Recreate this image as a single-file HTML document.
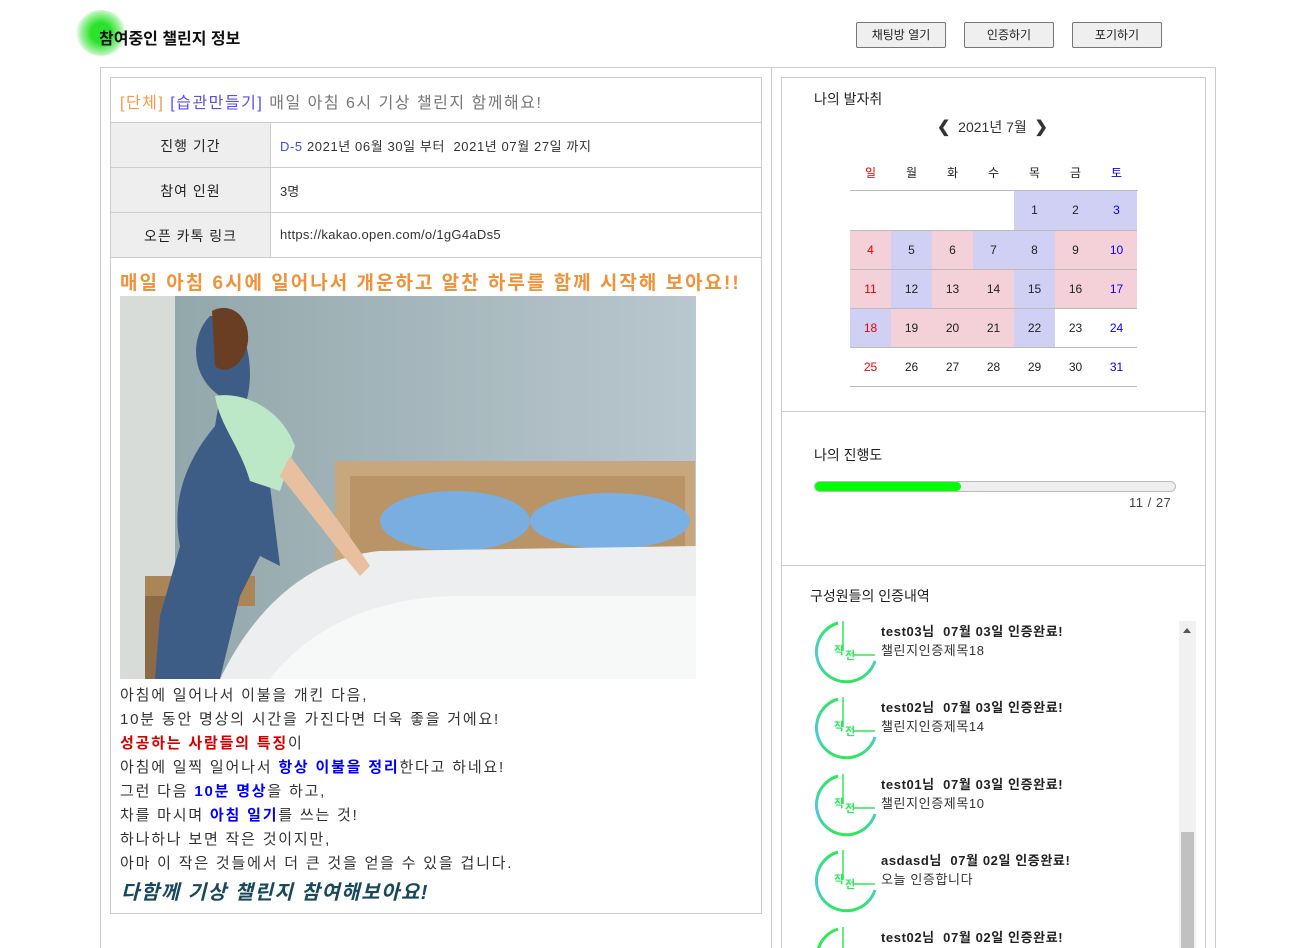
<!DOCTYPE html>
<html><head><meta charset="utf-8"><style>
*{margin:0;padding:0;box-sizing:border-box}
html,body{width:1311px;height:948px;overflow:hidden}
body{background:#fff;font-family:"Liberation Sans","Noto Sans CJK KR",sans-serif;color:#333;position:relative}
.abs{position:absolute}
.btn{position:absolute;top:22px;height:26px;width:90px;border:1px solid #777;border-radius:2px;background:#efefef;font-size:12px;text-align:center;line-height:24px;color:#222}
.cal{position:absolute;left:850px;top:190px;border-collapse:collapse}
.cal td{width:41px;height:39px;text-align:center;font-size:12px;border-bottom:1px solid #bbb;color:#222;padding:0}
.p{background:#d0cff4}.k{background:#f4d0d8}
.r{color:#e00 !important}.b{color:#00f !important}
.item{position:absolute;left:813px;width:300px;height:64px}
.item svg{position:absolute;left:0;top:0}
.item .t{position:absolute;left:68px;top:0;font-size:13px;font-weight:bold;color:#222;white-space:nowrap;letter-spacing:.6px}
.item .s{position:absolute;left:68px;top:19px;font-size:13px;color:#333;white-space:nowrap;letter-spacing:.6px}
.txt{position:absolute;left:120px;font-size:15px;color:#333;line-height:24px;letter-spacing:1.8px;white-space:nowrap}
</style></head><body>
<div class="abs" style="left:76px;top:10px;width:50px;height:46px;border-radius:50%;background:radial-gradient(circle,#2be32b 30%,rgba(80,230,80,.5) 60%,rgba(255,255,255,0) 75%)"></div>
<div class="abs" style="left:99px;top:25px;font-size:16px;font-weight:bold;color:#111">참여중인 챌린지 정보</div>
<div class="btn" style="left:856px">채팅방 열기</div>
<div class="btn" style="left:964px">인증하기</div>
<div class="btn" style="left:1072px">포기하기</div>

<div class="abs" style="left:100px;top:67px;width:1116px;height:900px;border:1px solid #ccc"></div>
<div class="abs" style="left:771px;top:67px;width:1px;height:900px;background:#ccc"></div>

<div class="abs" style="left:110px;top:77px;width:652px;height:837px;border:1px solid #ccc"></div>
<div class="abs" style="left:120px;top:89px;font-size:16px;color:#777;letter-spacing:1.5px;white-space:nowrap"><span style="color:#f29a4a">[단체]</span> <span style="color:#5a4df0">[습관만들기]</span> 매일 아침 6시 기상 챌린지 함께해요!</div>
<div class="abs" style="left:111px;top:122px;width:650px;height:1px;background:#ccc"></div>
<div class="abs" style="left:111px;top:123px;width:159px;height:134px;background:#eee"></div>
<div class="abs" style="left:270px;top:123px;width:1px;height:134px;background:#ccc"></div>
<div class="abs" style="left:111px;top:167px;width:650px;height:1px;background:#ccc"></div>
<div class="abs" style="left:111px;top:212px;width:650px;height:1px;background:#ccc"></div>
<div class="abs" style="left:111px;top:257px;width:650px;height:1px;background:#ccc"></div>
<div class="abs" style="left:111px;top:136px;width:159px;text-align:center;font-size:14px;color:#222;letter-spacing:1px">진행 기간</div>
<div class="abs" style="left:111px;top:181px;width:159px;text-align:center;font-size:14px;color:#222;letter-spacing:1px">참여 인원</div>
<div class="abs" style="left:111px;top:226px;width:159px;text-align:center;font-size:14px;color:#222;letter-spacing:1px">오픈 카톡 링크</div>
<div class="abs" style="left:280px;top:136px;font-size:13px;color:#333;letter-spacing:.6px;white-space:nowrap"><span style="color:#3a50e0">D-5</span> 2021년 06월 30일 부터 &nbsp;2021년 07월 27일 까지</div>
<div class="abs" style="left:280px;top:181px;font-size:13px">3명</div>
<div class="abs" style="left:280px;top:227px;font-size:13px;letter-spacing:.3px">https://kakao.open.com/o/1gG4aDs5</div>
<div class="abs" style="left:120px;top:268px;font-size:19px;font-weight:bold;color:#f0923a;white-space:nowrap;letter-spacing:2px">매일 아침 6시에 일어나서 개운하고 알찬 하루를 함께 시작해 보아요!!</div>

<svg class="abs" style="left:120px;top:296px" width="576" height="383" viewBox="0 0 576 383">
<defs><linearGradient id="w" x1="0" x2="1"><stop offset="0" stop-color="#8fa5a8"/><stop offset="1" stop-color="#b9c7ce"/></linearGradient></defs>
<rect width="576" height="383" fill="url(#w)"/>
<rect width="55" height="383" fill="#d8dcd8"/>
<rect x="215" y="165" width="360" height="120" fill="#c8a77c"/>
<rect x="230" y="180" width="335" height="80" fill="#b89466"/>
<rect x="25" y="280" width="110" height="30" fill="#a98558"/>
<rect x="25" y="300" width="60" height="83" fill="#8b6a45"/>
<ellipse cx="335" cy="225" rx="75" ry="30" fill="#7aaee0"/>
<ellipse cx="490" cy="225" rx="80" ry="28" fill="#7ab0e4"/>
<path d="M100 383 C140 300 200 260 260 255 L576 250 L576 383 Z" fill="#eceeef"/>
<path d="M150 383 C190 330 260 300 340 300 L576 300 L576 383Z" fill="#f7f8f8"/>
<path d="M90 20 C70 40 70 80 100 100 L95 130 C70 160 50 200 60 250 L40 320 L35 383 L100 383 L120 300 L140 260 L160 270 L150 190 C160 160 140 120 125 110 C135 80 130 40 110 20 Z" fill="#3e5d86"/>
<path d="M95 100 C120 95 160 110 175 150 L160 195 L130 185 C120 150 100 130 95 100Z" fill="#bde8c8"/>
<path d="M92 15 C110 5 130 20 128 45 C125 70 105 80 95 70 Z" fill="#6a3e22"/>
<path d="M170 160 C200 200 230 240 250 270 L240 280 C215 250 185 210 160 180Z" fill="#e8c0a0"/>
</svg>

<div class="txt" style="top:684px">아침에 일어나서 이불을 개킨 다음,<br>10분 동안 명상의 시간을 가진다면 더욱 좋을 거에요!<br><b style="color:#d40000">성공하는 사람들의 특징</b>이<br>아침에 일찍 일어나서 <b style="color:#00f">항상 이불을 정리</b>한다고 하네요!<br>그런 다음 <b style="color:#00f">10분 명상</b>을 하고,<br>차를 마시며 <b style="color:#00f">아침 일기</b>를 쓰는 것!<br>하나하나 보면 작은 것이지만,<br>아마 이 작은 것들에서 더 큰 것을 얻을 수 있을 겁니다.</div>
<div class="abs" style="left:121px;top:876px;font-size:20px;font-weight:bold;font-style:italic;color:#17495a;letter-spacing:1.5px;white-space:nowrap">다함께 기상 챌린지 참여해보아요!</div>

<div class="abs" style="left:781px;top:77px;width:425px;height:900px;border:1px solid #ccc"></div>
<div class="abs" style="left:782px;top:411px;width:423px;height:1px;background:#ccc"></div>
<div class="abs" style="left:782px;top:565px;width:423px;height:1px;background:#ccc"></div>
<div class="abs" style="left:814px;top:89px;font-size:14px;color:#222">나의 발자취</div>
<div class="abs" style="left:937px;top:117px;font-size:14px;color:#333"><b style="font-size:16px">&#10094;</b>&nbsp; 2021년 7월 &nbsp;<b style="font-size:16px">&#10095;</b></div>
<table class="cal" style="top:162px"><tr>
<td class="r" style="border:0;height:20px">일</td><td style="border:0;height:20px">월</td><td style="border:0;height:20px">화</td><td style="border:0;height:20px">수</td><td style="border:0;height:20px">목</td><td style="border:0;height:20px">금</td><td class="b" style="border:0;height:20px">토</td></tr></table>
<div class="abs" style="left:850px;top:190px;width:288px;height:1px;background:#bbb"></div>
<table class="cal" style="top:191px">
<tr><td></td><td></td><td></td><td></td><td class="p">1</td><td class="p">2</td><td class="p b">3</td></tr>
<tr><td class="k r">4</td><td class="p">5</td><td class="k">6</td><td class="p">7</td><td class="p">8</td><td class="k">9</td><td class="k b">10</td></tr>
<tr><td class="k r">11</td><td class="p">12</td><td class="k">13</td><td class="k">14</td><td class="p">15</td><td class="k">16</td><td class="k b">17</td></tr>
<tr><td class="p r">18</td><td class="k">19</td><td class="k">20</td><td class="k">21</td><td class="p">22</td><td>23</td><td class="b">24</td></tr>
<tr><td class="r">25</td><td>26</td><td>27</td><td>28</td><td>29</td><td>30</td><td class="b">31</td></tr>
</table>

<div class="abs" style="left:814px;top:445px;font-size:14px;color:#222">나의 진행도</div>
<div class="abs" style="left:814px;top:481px;width:362px;height:11px;border:1px solid #bbb;border-radius:6px;background:#eee"></div>
<div class="abs" style="left:815px;top:482px;width:146px;height:9px;border-radius:5px;background:#0f0"></div>
<div class="abs" style="left:1129px;top:495px;font-size:13px;color:#444;letter-spacing:.5px">11 / 27</div>

<div class="abs" style="left:810px;top:586px;font-size:14px;color:#222">구성원들의 인증내역</div>
<div class="abs" style="left:1179px;top:621px;width:17px;height:330px;background:#f1f1f1"></div>
<div class="abs" style="left:1181px;top:832px;width:13px;height:120px;background:#c1c1c1"></div>
<div class="abs" style="left:1183px;top:628px;width:0;height:0;border-left:4px solid transparent;border-right:4px solid transparent;border-bottom:5px solid #555"></div>

<svg width="0" height="0" style="position:absolute"><defs><linearGradient id="g" x1="0" y1="0" x2="0" y2="1"><stop offset="0" stop-color="#2ee85a"/><stop offset=".6" stop-color="#4ec8e0"/><stop offset="1" stop-color="#2ee85a"/></linearGradient></defs></svg>

<div class="item" style="top:621px"><svg width="66" height="64" viewBox="0 0 66 64"><path d="M25 2 A30 30 0 1 0 62 40" fill="none" stroke="url(#g)" stroke-width="3"/><path d="M30 0 V30 M40 34 H62" stroke="#2ee85a" stroke-width="1.5" fill="none"/><text x="21" y="33" font-size="11" font-weight="bold" fill="#2ee85a" font-family="Noto Sans CJK KR">작</text><text x="32" y="38" font-size="11" font-weight="bold" fill="#2ee85a" font-family="Noto Sans CJK KR">전</text></svg><div class="t">test03님 &nbsp;07월 03일 인증완료!</div><div class="s">챌린지인증제목18</div></div>
<div class="item" style="top:697px"><svg width="66" height="64" viewBox="0 0 66 64"><path d="M25 2 A30 30 0 1 0 62 40" fill="none" stroke="url(#g)" stroke-width="3"/><path d="M30 0 V30 M40 34 H62" stroke="#2ee85a" stroke-width="1.5" fill="none"/><text x="21" y="33" font-size="11" font-weight="bold" fill="#2ee85a" font-family="Noto Sans CJK KR">작</text><text x="32" y="38" font-size="11" font-weight="bold" fill="#2ee85a" font-family="Noto Sans CJK KR">전</text></svg><div class="t">test02님 &nbsp;07월 03일 인증완료!</div><div class="s">챌린지인증제목14</div></div>
<div class="item" style="top:774px"><svg width="66" height="64" viewBox="0 0 66 64"><path d="M25 2 A30 30 0 1 0 62 40" fill="none" stroke="url(#g)" stroke-width="3"/><path d="M30 0 V30 M40 34 H62" stroke="#2ee85a" stroke-width="1.5" fill="none"/><text x="21" y="33" font-size="11" font-weight="bold" fill="#2ee85a" font-family="Noto Sans CJK KR">작</text><text x="32" y="38" font-size="11" font-weight="bold" fill="#2ee85a" font-family="Noto Sans CJK KR">전</text></svg><div class="t">test01님 &nbsp;07월 03일 인증완료!</div><div class="s">챌린지인증제목10</div></div>
<div class="item" style="top:850px"><svg width="66" height="64" viewBox="0 0 66 64"><path d="M25 2 A30 30 0 1 0 62 40" fill="none" stroke="url(#g)" stroke-width="3"/><path d="M30 0 V30 M40 34 H62" stroke="#2ee85a" stroke-width="1.5" fill="none"/><text x="21" y="33" font-size="11" font-weight="bold" fill="#2ee85a" font-family="Noto Sans CJK KR">작</text><text x="32" y="38" font-size="11" font-weight="bold" fill="#2ee85a" font-family="Noto Sans CJK KR">전</text></svg><div class="t">asdasd님 &nbsp;07월 02일 인증완료!</div><div class="s">오늘 인증합니다</div></div>
<div class="abs" style="left:881px;top:927px;font-size:13px;font-weight:bold;color:#222;white-space:nowrap;letter-spacing:.6px">test02님 &nbsp;07월 02일 인증완료!</div>
<svg class="abs" style="left:813px;top:927px" width="66" height="21" viewBox="0 0 66 21"><path d="M25 2 A30 30 0 0 0 4 30" fill="none" stroke="#2ee85a" stroke-width="3"/><path d="M30 0 V21" stroke="#2ee85a" stroke-width="1.5"/></svg>
</body></html>
